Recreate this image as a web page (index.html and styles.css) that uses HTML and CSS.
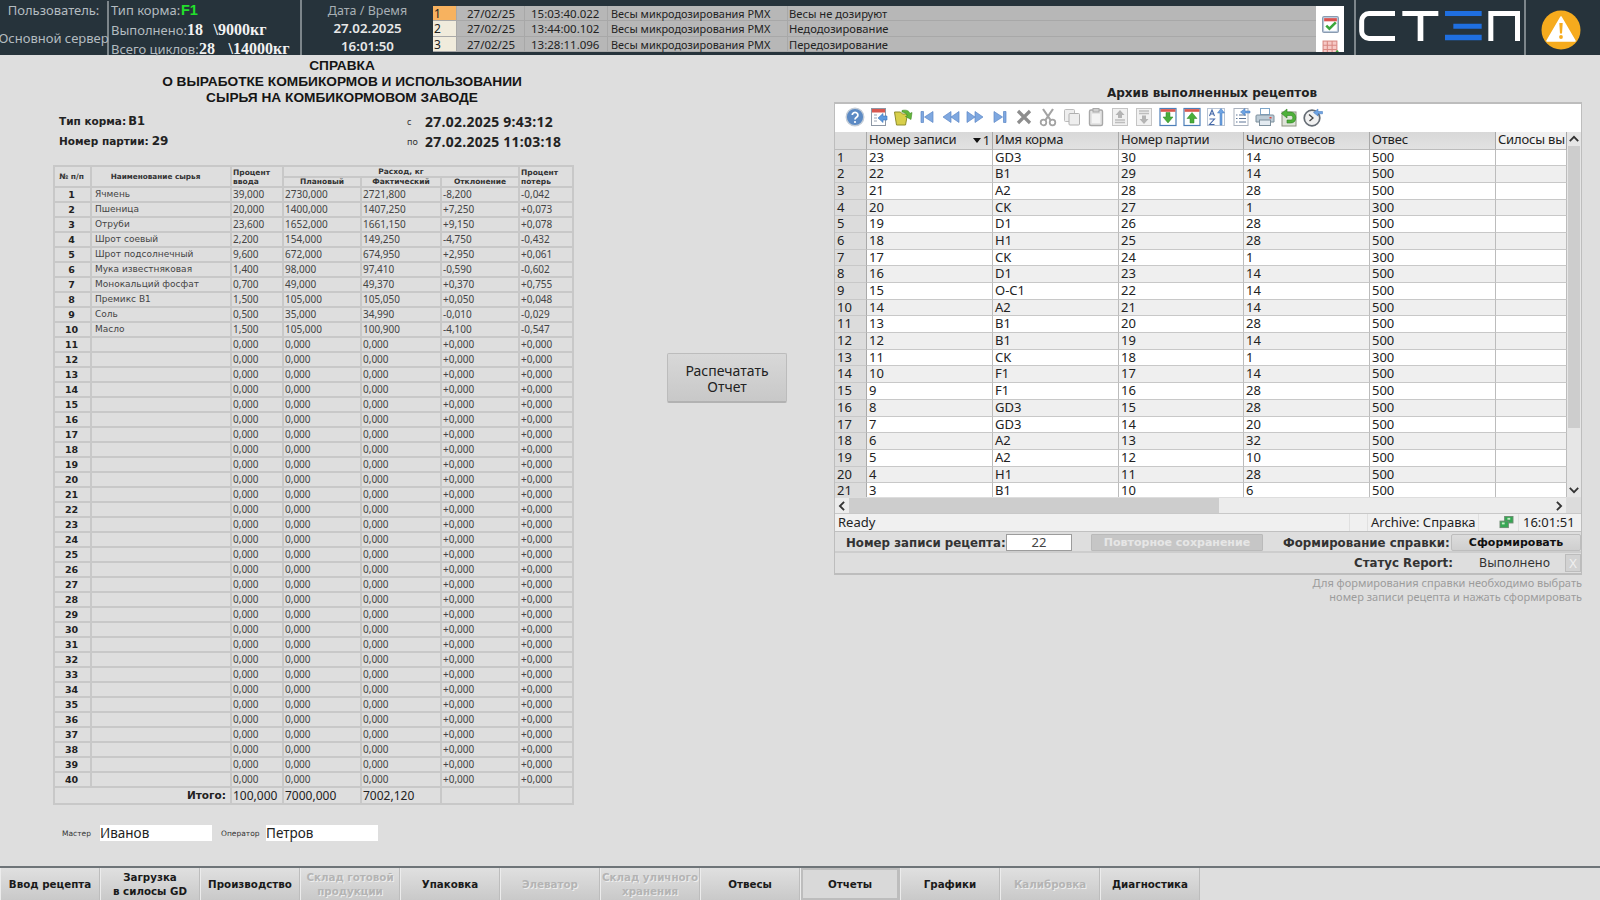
FILE: index.html
```html
<!DOCTYPE html>
<html lang="ru">
<head>
<meta charset="utf-8">
<title>Справка</title>
<link rel="stylesheet" href="styles.css">
</head>
<body>
<header class="top">
  <div class="user-col"><span>Пользователь:</span><span>Основной сервер</span></div>
  <div class="feed-col">
    <div class="feed-line"><span class="feed-label l1">Тип корма:</span><b class="feed-green">F1</b></div>
    <div class="feed-line"><span class="feed-label l2">Выполнено:</span><b class="feed-num n1">18</b><b class="feed-num">\9000кг</b></div>
    <div class="feed-line"><span class="feed-label l3">Всего циклов:</span><b class="feed-num n2">28</b><b class="feed-num">\14000кг</b></div>
  </div>
  <div class="date-col"><span class="date-title">Дата / Время</span><b>27.02.2025</b><b>16:01:50</b></div>
  <div class="alarms">
    <div class="alarm-list">
      <div class="alarm-row"><span class="a-n a-hot">1</span><span class="a-d">27/02/25</span><span class="a-t">15:03:40.022</span><span class="a-s">Весы микродозирования РМХ</span><span class="a-m">Весы не дозируют</span></div>
      <div class="alarm-row"><span class="a-n">2</span><span class="a-d">27/02/25</span><span class="a-t">13:44:00.102</span><span class="a-s">Весы микродозирования РМХ</span><span class="a-m">Недодозирование</span></div>
      <div class="alarm-row"><span class="a-n">3</span><span class="a-d">27/02/25</span><span class="a-t">13:28:11.096</span><span class="a-s">Весы микродозирования РМХ</span><span class="a-m">Передозирование</span></div>
    </div>
    <div class="alarm-tools">
      <svg class="alarm-icon" viewBox="0 0 16 16"><rect x=".5" y=".5" width="15" height="15" rx="1.5" fill="#b9c9dc" stroke="#8a9bb0"/><rect x="2" y="2" width="12" height="12" fill="#fff"/><rect x="2" y="2" width="12" height="3" fill="#d9534f"/><path d="M4 9l3 3 6-6" fill="none" stroke="#3aa63a" stroke-width="2.4"/></svg>
      <svg class="alarm-icon clipped" viewBox="0 0 16 16"><rect x="1" y="1" width="13" height="14" fill="#f6c9c6" stroke="#d98882"/><path d="M1 5h13M1 9h13M5 1v14M9.500 1v14" stroke="#d98882"/><path d="M8 12l3 3 4-5" fill="none" stroke="#3aa63a" stroke-width="2"/></svg>
    </div>
  </div>
  <div class="logo-col">
    <svg class="logo" viewBox="237 37 483 90">
      <path d="M345 44.500H267a22 22 0 0 0-22 22v31a22 22 0 0 0 22 22h78" fill="none" stroke="#fff" stroke-width="15"/>
      <path d="M367 37h108v15h-45v75h-17V52h-46z" fill="#fff"/>
      <path d="M495 37h110v15H495zM520 75h85v15h-85zM495 108h110v17H495z" fill="#1f6fe0"/>
      <path d="M625 127V37h95v90h-15V52h-65v75z" fill="#fff"/>
    </svg>
  </div>
  <div class="warn-col">
    <svg class="warn" viewBox="0 0 40 40"><circle cx="20" cy="20" r="19.500" fill="#f6ab1d"/><path d="M20 7L34 31H6z" fill="#fff" stroke="#fff" stroke-width="1.500" stroke-linejoin="round"/><path d="M18.300 13h3.400l-.7 10.500h-2z" fill="#f6ab1d"/><circle cx="20" cy="27" r="1.900" fill="#f6ab1d"/></svg>
  </div>
</header>

<main class="main">
  <section class="report">
    <h1 class="report-title">СПРАВКА<br>О ВЫРАБОТКЕ КОМБИКОРМОВ И ИСПОЛЬЗОВАНИИ<br>СЫРЬЯ НА КОМБИКОРМОВОМ ЗАВОДЕ</h1>
    <div class="meta">
      <div class="meta-left">
        <div class="meta-line"><b class="meta-label">Тип корма:</b><b class="meta-val">B1</b></div>
        <div class="meta-line"><b class="meta-label">Номер партии:</b><b class="meta-val big">29</b></div>
      </div>
      <div class="meta-right">
        <div class="meta-line"><span class="meta-small">с</span><b class="meta-date">27.02.2025 9:43:12</b></div>
        <div class="meta-line"><span class="meta-small">по</span><b class="meta-date">27.02.2025 11:03:18</b></div>
      </div>
    </div>
    <table class="rt">
      <colgroup><col class="c1"><col class="c2"><col class="c3"><col class="c4"><col class="c5"><col class="c6"><col class="c7"></colgroup>
      <thead>
        <tr class="h1"><th class="hn" rowspan="2">№ п/п</th><th class="hname" rowspan="2">Наименование сырья</th><th class="hl" rowspan="2">Процент<br>ввода</th><th colspan="3">Расход, кг</th><th class="hl" rowspan="2">Процент<br>потерь</th></tr>
        <tr class="h2"><th>Плановый</th><th>Фактический</th><th>Отклонение</th></tr>
      </thead>
      <tbody>
        <tr><th>1</th><td>Ячмень</td><td>39,000</td><td>2730,000</td><td>2721,800</td><td>-8,200</td><td>-0,042</td></tr>
        <tr><th>2</th><td>Пшеница</td><td>20,000</td><td>1400,000</td><td>1407,250</td><td>+7,250</td><td>+0,073</td></tr>
        <tr><th>3</th><td>Отруби</td><td>23,600</td><td>1652,000</td><td>1661,150</td><td>+9,150</td><td>+0,078</td></tr>
        <tr><th>4</th><td>Шрот соевый</td><td>2,200</td><td>154,000</td><td>149,250</td><td>-4,750</td><td>-0,432</td></tr>
        <tr><th>5</th><td>Шрот подсолнечный</td><td>9,600</td><td>672,000</td><td>674,950</td><td>+2,950</td><td>+0,061</td></tr>
        <tr><th>6</th><td>Мука известняковая</td><td>1,400</td><td>98,000</td><td>97,410</td><td>-0,590</td><td>-0,602</td></tr>
        <tr><th>7</th><td>Монокальций фосфат</td><td>0,700</td><td>49,000</td><td>49,370</td><td>+0,370</td><td>+0,755</td></tr>
        <tr><th>8</th><td>Премикс B1</td><td>1,500</td><td>105,000</td><td>105,050</td><td>+0,050</td><td>+0,048</td></tr>
        <tr><th>9</th><td>Соль</td><td>0,500</td><td>35,000</td><td>34,990</td><td>-0,010</td><td>-0,029</td></tr>
        <tr><th>10</th><td>Масло</td><td>1,500</td><td>105,000</td><td>100,900</td><td>-4,100</td><td>-0,547</td></tr>
        <tr><th>11</th><td></td><td>0,000</td><td>0,000</td><td>0,000</td><td>+0,000</td><td>+0,000</td></tr>
        <tr><th>12</th><td></td><td>0,000</td><td>0,000</td><td>0,000</td><td>+0,000</td><td>+0,000</td></tr>
        <tr><th>13</th><td></td><td>0,000</td><td>0,000</td><td>0,000</td><td>+0,000</td><td>+0,000</td></tr>
        <tr><th>14</th><td></td><td>0,000</td><td>0,000</td><td>0,000</td><td>+0,000</td><td>+0,000</td></tr>
        <tr><th>15</th><td></td><td>0,000</td><td>0,000</td><td>0,000</td><td>+0,000</td><td>+0,000</td></tr>
        <tr><th>16</th><td></td><td>0,000</td><td>0,000</td><td>0,000</td><td>+0,000</td><td>+0,000</td></tr>
        <tr><th>17</th><td></td><td>0,000</td><td>0,000</td><td>0,000</td><td>+0,000</td><td>+0,000</td></tr>
        <tr><th>18</th><td></td><td>0,000</td><td>0,000</td><td>0,000</td><td>+0,000</td><td>+0,000</td></tr>
        <tr><th>19</th><td></td><td>0,000</td><td>0,000</td><td>0,000</td><td>+0,000</td><td>+0,000</td></tr>
        <tr><th>20</th><td></td><td>0,000</td><td>0,000</td><td>0,000</td><td>+0,000</td><td>+0,000</td></tr>
        <tr><th>21</th><td></td><td>0,000</td><td>0,000</td><td>0,000</td><td>+0,000</td><td>+0,000</td></tr>
        <tr><th>22</th><td></td><td>0,000</td><td>0,000</td><td>0,000</td><td>+0,000</td><td>+0,000</td></tr>
        <tr><th>23</th><td></td><td>0,000</td><td>0,000</td><td>0,000</td><td>+0,000</td><td>+0,000</td></tr>
        <tr><th>24</th><td></td><td>0,000</td><td>0,000</td><td>0,000</td><td>+0,000</td><td>+0,000</td></tr>
        <tr><th>25</th><td></td><td>0,000</td><td>0,000</td><td>0,000</td><td>+0,000</td><td>+0,000</td></tr>
        <tr><th>26</th><td></td><td>0,000</td><td>0,000</td><td>0,000</td><td>+0,000</td><td>+0,000</td></tr>
        <tr><th>27</th><td></td><td>0,000</td><td>0,000</td><td>0,000</td><td>+0,000</td><td>+0,000</td></tr>
        <tr><th>28</th><td></td><td>0,000</td><td>0,000</td><td>0,000</td><td>+0,000</td><td>+0,000</td></tr>
        <tr><th>29</th><td></td><td>0,000</td><td>0,000</td><td>0,000</td><td>+0,000</td><td>+0,000</td></tr>
        <tr><th>30</th><td></td><td>0,000</td><td>0,000</td><td>0,000</td><td>+0,000</td><td>+0,000</td></tr>
        <tr><th>31</th><td></td><td>0,000</td><td>0,000</td><td>0,000</td><td>+0,000</td><td>+0,000</td></tr>
        <tr><th>32</th><td></td><td>0,000</td><td>0,000</td><td>0,000</td><td>+0,000</td><td>+0,000</td></tr>
        <tr><th>33</th><td></td><td>0,000</td><td>0,000</td><td>0,000</td><td>+0,000</td><td>+0,000</td></tr>
        <tr><th>34</th><td></td><td>0,000</td><td>0,000</td><td>0,000</td><td>+0,000</td><td>+0,000</td></tr>
        <tr><th>35</th><td></td><td>0,000</td><td>0,000</td><td>0,000</td><td>+0,000</td><td>+0,000</td></tr>
        <tr><th>36</th><td></td><td>0,000</td><td>0,000</td><td>0,000</td><td>+0,000</td><td>+0,000</td></tr>
        <tr><th>37</th><td></td><td>0,000</td><td>0,000</td><td>0,000</td><td>+0,000</td><td>+0,000</td></tr>
        <tr><th>38</th><td></td><td>0,000</td><td>0,000</td><td>0,000</td><td>+0,000</td><td>+0,000</td></tr>
        <tr><th>39</th><td></td><td>0,000</td><td>0,000</td><td>0,000</td><td>+0,000</td><td>+0,000</td></tr>
        <tr><th>40</th><td></td><td>0,000</td><td>0,000</td><td>0,000</td><td>+0,000</td><td>+0,000</td></tr>
      </tbody>
      <tfoot>
        <tr><th class="total-label" colspan="2">Итого:</th><td>100,000</td><td>7000,000</td><td>7002,120</td><td></td><td></td></tr>
      </tfoot>
    </table>
    <div class="signs">
      <span class="sign-label sl1">Мастер</span><span class="sign-box">Иванов</span>
      <span class="sign-label sl2">Оператор</span><span class="sign-box">Петров</span>
    </div>
  </section>

  <section class="print-col">
    <button class="print-btn">Распечатать<br>Отчет</button>
  </section>

  <section class="archive">
    <h2 class="archive-title">Архив выполненных рецептов</h2>
    <div class="panel">
      <div class="toolbar">
        <svg class="ti" viewBox="0 0 20 20"><circle cx="10" cy="10" r="8.800" fill="#5c8ac4" stroke="#c3ccd6" stroke-width="1.400"/><path d="M7.300 8a2.800 2.600 0 1 1 4.300 2.200c-1 .7-1.600 1.100-1.600 2.300" fill="none" stroke="#fff" stroke-width="1.800"/><circle cx="10" cy="15" r="1.100" fill="#fff"/></svg>
        <svg class="ti" viewBox="0 0 20 20"><rect x="2.500" y="1.500" width="14" height="17" fill="#fff" stroke="#8d97a5"/><rect x="3" y="2" width="13" height="3.500" fill="#d9574f"/><path d="M5 8h3M5 11h3M5 14h3" stroke="#9aa5b4"/><path d="M18 9h-4V6.500L9 11l5 4.500V13h4z" fill="#5d9be0" stroke="#3b74b8" stroke-width=".6"/></svg>
        <svg class="ti" viewBox="0 0 20 20"><path d="M1.500 5h6l2 2h5l-2 11H3.500z" fill="#d8cf4a" stroke="#8e8d2b"/><path d="M9 3.500c4-1 7 0 8 3l2-1-1 7-5.500-3 2-1c-1-2-3-3-5.500-3.500z" fill="#63b53a" stroke="#3c8a25" stroke-width=".6"/></svg>
        <svg class="ti" viewBox="0 0 20 20"><path d="M4 4.500h2.500v11H4zM16 4.500v11L7.500 10z" fill="#7fa8e0" stroke="#5b86c6" stroke-width=".7"/></svg>
        <svg class="ti" viewBox="0 0 20 20"><path d="M10 4.500v11L2 10zM18 4.500v11L10 10z" fill="#7fa8e0" stroke="#5b86c6" stroke-width=".7"/></svg>
        <svg class="ti" viewBox="0 0 20 20"><path d="M10 4.500v11l8-5.500zM2 4.500v11l8-5.500z" fill="#7fa8e0" stroke="#5b86c6" stroke-width=".7"/></svg>
        <svg class="ti" viewBox="0 0 20 20"><path d="M16 4.500h-2.500v11H16zM4 4.500v11l8.500-5.500z" fill="#7fa8e0" stroke="#5b86c6" stroke-width=".7"/></svg>
        <svg class="ti" viewBox="0 0 20 20"><path d="M4 4l12 12M16 4L4 16" stroke="#8d8d8d" stroke-width="3.200"/></svg>
        <svg class="ti" viewBox="0 0 20 20"><path d="M5 2l7.500 11M15 2L7.500 13" stroke="#a3a3a3" stroke-width="2.200"/><circle cx="5.500" cy="15.500" r="2.800" fill="none" stroke="#a3a3a3" stroke-width="1.800"/><circle cx="14.500" cy="15.500" r="2.800" fill="none" stroke="#a3a3a3" stroke-width="1.800"/></svg>
        <svg class="ti" viewBox="0 0 20 20"><rect x="2.500" y="2.500" width="10" height="12" rx="1" fill="#eee" stroke="#bcbcbc"/><rect x="7" y="6.500" width="10.500" height="11.500" rx="1" fill="#eee" stroke="#b0b0b0"/></svg>
        <svg class="ti" viewBox="0 0 20 20"><rect x="3.500" y="3" width="13" height="15.500" rx="1.500" fill="#e4e4e4" stroke="#a8a8a8" stroke-width="1.400"/><rect x="7" y="1.500" width="6" height="3.500" fill="#cfcfcf" stroke="#a8a8a8"/><rect x="6" y="7" width="8" height="9" fill="#f4f4f4"/></svg>
        <svg class="ti" viewBox="0 0 20 20"><rect x="2.500" y="1.500" width="15" height="17" fill="#f1f1f1" stroke="#c5c5c5"/><path d="M10 3l4.500 5H12v3H8V8H5.500z" fill="#b4b4b4"/><path d="M5 13h10M5 15.500h10" stroke="#bdbdbd" stroke-width="1.500"/></svg>
        <svg class="ti" viewBox="0 0 20 20"><rect x="2.500" y="1.500" width="15" height="17" fill="#f1f1f1" stroke="#c5c5c5"/><path d="M5 4h10M5 6.500h10" stroke="#bdbdbd" stroke-width="1.500"/><path d="M10 17l4.500-5H12V8.500H8V12H5.500z" fill="#b4b4b4"/></svg>
        <svg class="ti" viewBox="0 0 20 20"><rect x="2" y="1.500" width="16" height="17" fill="#fff" stroke="#4d7fb8" stroke-width="1.200"/><rect x="2.600" y="2.100" width="14.800" height="2.700" fill="#d9574f"/><path d="M8 5.500h4V10h3l-5 6-5-6h3z" fill="#49ad3a" stroke="#2e8526" stroke-width=".5"/></svg>
        <svg class="ti" viewBox="0 0 20 20"><rect x="2" y="1.500" width="16" height="17" fill="#fff" stroke="#4d7fb8" stroke-width="1.200"/><rect x="2.600" y="2.100" width="14.800" height="2.700" fill="#d9574f"/><path d="M8 16h4v-4.500h3l-5-6-5 6h3z" fill="#49ad3a" stroke="#2e8526" stroke-width=".5"/></svg>
        <svg class="ti" viewBox="0 0 20 20"><rect x="1.500" y="1.500" width="17" height="17" fill="#fdfdfd" stroke="#b8c4d4"/><path d="M3.500 9l2.500-6 2.500 6M4.500 7h3M3.500 12h5l-5 5.500h5" fill="none" stroke="#4468a8" stroke-width="1.100"/><path d="M14 18V6h-2.500l3.500-4.500L18.500 6H16v12z" fill="#6ea3e2" stroke="#3f74ba" stroke-width=".5"/></svg>
        <svg class="ti" viewBox="0 0 20 20"><rect x="3" y="1.500" width="14" height="17" fill="#fff" stroke="#aab2be"/><path d="M5 8h1.500M5 11.500h1.500M5 15h1.500M8 8h7M8 11.500h7M8 15h7" stroke="#5d7596"/><path d="M19 4h-5V1.500L9.500 5l4.500 3.500V6h5z" fill="#6ea3e2" stroke="#3f74ba" stroke-width=".5"/></svg>
        <svg class="ti" viewBox="0 0 20 20"><rect x="5.500" y="1.500" width="9" height="6" fill="#fff" stroke="#7ea6c9"/><path d="M2 8h16a1 1 0 0 1 1 1v6H1V9a1 1 0 0 1 1-1z" fill="#bccbd6" stroke="#7d8f9c"/><rect x="4.500" y="13" width="11" height="5.500" fill="#e4ebf1" stroke="#7d8f9c"/><rect x="14.500" y="10" width="2" height="1.500" fill="#e0483e"/></svg>
        <svg class="ti" viewBox="0 0 20 20"><rect x="3" y="5" width="14" height="14" fill="#dfe3d9" stroke="#8b927f"/><path d="M8 2L2.500 6.500 8 11V8.500h3.500c1.500 0 2.300.8 2.300 2.200s-.8 2.300-2.300 2.300H8V16h3.500c3.300 0 5.300-2 5.300-5.300S14.800 5 11.500 5H8z" fill="#4fb13a" stroke="#2b8120" stroke-width=".6"/></svg>
        <svg class="ti" viewBox="0 0 20 20"><circle cx="9" cy="11" r="7.800" fill="#f1f1f1" stroke="#656c74" stroke-width="1.700"/><path d="M6 7.500L10 11l-3.500 3" fill="none" stroke="#444" stroke-width="1.300"/><path d="M19.500 4.500H15V2l-4.500 3.500L15 9V6.800h4.500z" fill="#6ea3e2" stroke="#3f74ba" stroke-width=".5"/></svg>
      </div>
      <div class="grid-area">
        <div class="grid-body">
          <div class="grow ghead"><span class="rh"></span><span class="sorted">Номер записи<i class="sort-mark"><i class="sort-tri"></i>1</i></span><span>Имя корма</span><span>Номер партии</span><span>Число отвесов</span><span>Отвес</span><span>Силосы вы</span></div>
          <div class="grow"><span class="rh">1</span><span>23</span><span>GD3</span><span>30</span><span>14</span><span>500</span><span></span></div>
          <div class="grow alt"><span class="rh">2</span><span>22</span><span>B1</span><span>29</span><span>14</span><span>500</span><span></span></div>
          <div class="grow"><span class="rh">3</span><span>21</span><span>A2</span><span>28</span><span>28</span><span>500</span><span></span></div>
          <div class="grow alt"><span class="rh">4</span><span>20</span><span>CK</span><span>27</span><span>1</span><span>300</span><span></span></div>
          <div class="grow"><span class="rh">5</span><span>19</span><span>D1</span><span>26</span><span>28</span><span>500</span><span></span></div>
          <div class="grow alt"><span class="rh">6</span><span>18</span><span>H1</span><span>25</span><span>28</span><span>500</span><span></span></div>
          <div class="grow"><span class="rh">7</span><span>17</span><span>CK</span><span>24</span><span>1</span><span>300</span><span></span></div>
          <div class="grow alt"><span class="rh">8</span><span>16</span><span>D1</span><span>23</span><span>14</span><span>500</span><span></span></div>
          <div class="grow"><span class="rh">9</span><span>15</span><span>O-C1</span><span>22</span><span>14</span><span>500</span><span></span></div>
          <div class="grow alt"><span class="rh">10</span><span>14</span><span>A2</span><span>21</span><span>14</span><span>500</span><span></span></div>
          <div class="grow"><span class="rh">11</span><span>13</span><span>B1</span><span>20</span><span>28</span><span>500</span><span></span></div>
          <div class="grow alt"><span class="rh">12</span><span>12</span><span>B1</span><span>19</span><span>14</span><span>500</span><span></span></div>
          <div class="grow"><span class="rh">13</span><span>11</span><span>CK</span><span>18</span><span>1</span><span>300</span><span></span></div>
          <div class="grow alt"><span class="rh">14</span><span>10</span><span>F1</span><span>17</span><span>14</span><span>500</span><span></span></div>
          <div class="grow"><span class="rh">15</span><span>9</span><span>F1</span><span>16</span><span>28</span><span>500</span><span></span></div>
          <div class="grow alt"><span class="rh">16</span><span>8</span><span>GD3</span><span>15</span><span>28</span><span>500</span><span></span></div>
          <div class="grow"><span class="rh">17</span><span>7</span><span>GD3</span><span>14</span><span>20</span><span>500</span><span></span></div>
          <div class="grow alt"><span class="rh">18</span><span>6</span><span>A2</span><span>13</span><span>32</span><span>500</span><span></span></div>
          <div class="grow"><span class="rh">19</span><span>5</span><span>A2</span><span>12</span><span>10</span><span>500</span><span></span></div>
          <div class="grow alt"><span class="rh">20</span><span>4</span><span>H1</span><span>11</span><span>28</span><span>500</span><span></span></div>
          <div class="grow last"><span class="rh">21</span><span>3</span><span>B1</span><span>10</span><span>6</span><span>500</span><span></span></div>
        </div>
        <div class="vscroll">
          <svg class="chev" viewBox="0 0 10 10"><path d="M2 6.500L5 3.500l3 3" fill="none" stroke="#333" stroke-width="1.300"/></svg>
          <div class="vtrack"><div class="vthumb"></div></div>
          <svg class="chev" viewBox="0 0 10 10"><path d="M2 3.500L5 6.500l3-3" fill="none" stroke="#333" stroke-width="1.300"/></svg>
        </div>
      </div>
      <div class="hscroll">
        <svg class="chev" viewBox="0 0 10 10"><path d="M6.500 2L3.500 5l3 3" fill="none" stroke="#333" stroke-width="1.300"/></svg>
        <div class="htrack"><div class="hthumb"></div></div>
        <svg class="chev" viewBox="0 0 10 10"><path d="M3.500 2L6.500 5l-3 3" fill="none" stroke="#333" stroke-width="1.300"/></svg>
        <span class="corner"></span>
      </div>
      <div class="statusbar">
        <span class="st-ready">Ready</span>
        <span class="st-gap"></span>
        <span class="st-arch">Archive: Справка</span>
        <span class="st-icon"><svg class="net" viewBox="0 0 16 14"><rect x="6" y="0.500" width="9" height="7" fill="#35a853" stroke="#6c8a70"/><rect x="1" y="5.500" width="9" height="7" fill="#35a853" stroke="#6c8a70"/><rect x="3" y="7" width="3" height="2" fill="#c7ebc7"/><rect x="9" y="2" width="3" height="2" fill="#c7ebc7"/></svg></span>
        <span class="st-time">16:01:51</span>
      </div>
      <div class="form-row">
        <b class="form-label lbl-rec">Номер записи рецепта:</b>
        <span class="rec-input">22</span>
        <span class="btn-off">Повторное сохранение</span>
        <b class="form-label lbl-form">Формирование справки:</b>
        <button class="btn-make">Сформировать</button>
      </div>
      <div class="status-row">
        <b class="form-label">Статус Report:</b>
        <span class="status-val">Выполнено</span>
        <span class="x-btn">X</span>
      </div>
    </div>
    <p class="hint">Для формирования справки необходимо выбрать<br>номер записи рецепта и нажать сформировать</p>
  </section>
</main>

<nav class="nav">
  <button class="nb">Ввод рецепта</button>
  <button class="nb">Загрузка<br>в силосы GD</button>
  <button class="nb">Производство</button>
  <button class="nb off">Склад готовой<br>продукции</button>
  <button class="nb">Упаковка</button>
  <button class="nb off">Элеватор</button>
  <button class="nb off">Склад уличного<br>хранения</button>
  <button class="nb">Отвесы</button>
  <button class="nb on">Отчеты</button>
  <button class="nb">Графики</button>
  <button class="nb off">Калибровка</button>
  <button class="nb">Диагностика</button>
</nav>
</body>
</html>
```

FILE: styles.css
```css
* { box-sizing: border-box; }
html, body { margin: 0; padding: 0; }
body {
  width: 1600px; height: 900px; overflow: hidden;
  display: flex; flex-direction: column;
  background: #dedede; color: #222;
  font-family: "Noto Sans", "Liberation Sans", sans-serif;
}
/* header */
.top { height: 55px; flex: none; display: flex; background: #26333b; color: #b4bcc0; font-size: 13px; }
.user-col { width: 109px; flex: none; border-right: 2px solid #7d868b; margin: 1px 0 0; display: flex; flex-direction: column; align-items: center; font-size: 13px; white-space: nowrap; line-height: 16px; }
.user-col span:first-child { padding: 1px 0 0; height: 29px; }
.feed-col { width: 193px; flex: none; border-right: 2px solid #7d868b; padding: 0 0 0 2px; }
.feed-line { height: 19.500px; display: flex; align-items: center; white-space: nowrap; font-size: 13px; }
.feed-line:first-child { height: 20px; }
.l1 { width: 70px; }
.l2 { width: 76px; }
.l3 { width: 88px; }
.feed-green { color: #22e02b; font-size: 14.500px; font-family: "Liberation Sans", sans-serif; }
.feed-num { color: #f2f2f2; font-family: "Liberation Serif", serif; font-size: 16px; }
.n1 { width: 26.500px; }
.n2 { width: 29.500px; }
.date-col { width: 131px; flex: none; display: flex; flex-direction: column; align-items: center; padding: 2px 0 0; font-size: 13.300px; line-height: 18px; }
.date-col b { color: #e8e8e8; font-weight: 600; }
.date-title { font-size: 12.500px; line-height: 17px; color: #a8b0b5; }
.alarms { width: 911px; height: 46px; margin-top: 6px; flex: none; display: flex; }
.alarm-list { flex: 1; background: #b7b7b7; font-size: 11.500px; color: #222; }
.alarm-row { display: flex; height: 15.330px; line-height: 15px; border-bottom: 1px solid #a8a8a8; white-space: nowrap; }
.alarm-row span { padding-left: 1px; border-right: 1px solid #a8a8a8; }
.a-n { width: 24px; padding-left: 4px; background: #f0ebdc; font-size: 12px; }
.a-hot { background: #f7b25f; }
.a-d { width: 68px; padding-left: 10px !important; }
.a-t { width: 83px; padding-left: 6px !important; }
.a-s { width: 180px; font-size: 10.900px; padding-left: 3px !important; }
.a-m { flex: 1; border-right: 0 !important; font-size: 11.200px; }
.alarm-tools { width: 28px; background: #fff; overflow: hidden; padding: 10px 0 0 6px; display: flex; flex-direction: column; gap: 7px; }
.alarm-icon { width: 17px; height: 17px; flex: none; }
.logo-col { margin-left: 10px; width: 172px; flex: none; border-left: 2px solid #7d868b; border-right: 2px solid #7d868b; padding: 11px 0 0 3px; }
.logo { width: 161px; height: 30px; display: block; }
.warn-col { flex: 1; padding: 10px 0 0 15px; }
.warn { width: 40px; height: 40px; display: block; }

/* layout */
.main { flex: 1; display: flex; min-height: 0; }
.report { width: 667px; flex: none; padding: 3px 0 0 53px; }
.report-title { margin: 0 0 0 -53px; width: 684px; text-align: center; font-family: "Liberation Sans", sans-serif; font-weight: 700; font-size: 13.700px; line-height: 16px; color: #151515; }
.meta { display: flex; margin-top: 5px; padding-left: 6px; height: 41px; }
.meta-left { width: 348px; }
.meta-line { height: 20px; display: flex; align-items: center; white-space: nowrap; }
.meta-label { font-family: "DejaVu Sans", sans-serif; font-size: 10.500px; }
.meta-val { font-family: "DejaVu Sans", sans-serif; font-size: 11.500px; margin-left: 2px; }
.meta-val.big { font-size: 12px; margin-left: 3px; }
.meta-small { width: 18px; font-size: 9px; color: #333; }
.meta-date { font-family: "Open Sans", sans-serif; font-size: 13.900px; letter-spacing: .3px; }

/* report table */
.rt { width: 519px; table-layout: fixed; border-collapse: collapse; margin-top: 13px; font-size: 10px; color: #444; }
.c1 { width: 37px; } .c2 { width: 140px; } .c3 { width: 52px; } .c4 { width: 78px; } .c5 { width: 80px; } .c6 { width: 78px; } .c7 { width: 54px; }
.rt th, .rt td { border: 2px solid #c8c8c8; height: 15px; padding: 0 1px; line-height: 11px; white-space: nowrap; }
.rt td { text-align: left; }
.rt td:nth-child(2) { padding-left: 3px; font-family: "DejaVu Sans", sans-serif; font-size: 9px; }
.rt tbody th { font-family: "DejaVu Sans", sans-serif; font-size: 9.500px; color: #222; padding-right: 3px; }
.rt thead th { font-family: "DejaVu Sans", sans-serif; font-size: 7.500px; color: #333; }
.rt thead th.hn { padding-right: 3px; }
.rt thead th.hname { font-size: 7.300px; padding-right: 12px; }
.rt .h1 th { height: 9px; line-height: 9px; }
.rt .h2 th { height: 10px; line-height: 8px; }
.rt thead th.hl { text-align: left; padding-left: 1px; line-height: 9px; }
.rt tfoot td { height: 17px; font-size: 12px; color: #222; }
.rt tfoot td:nth-child(2) { font-family: inherit; font-size: 12px; padding-left: 1px; }
.total-label { text-align: right; font-family: "DejaVu Sans", sans-serif; font-size: 10.500px; padding-right: 4px !important; color: #222; }
.signs { display: flex; align-items: center; height: 16px; margin-top: 20px; }
.sign-label { font-family: "DejaVu Sans", sans-serif; font-size: 7.500px; color: #333; }
.sl1 { margin-left: 9px; width: 38px; }
.sl2 { margin-left: 9px; width: 45px; }
.sign-box { width: 112px; height: 16px; background: #fff; font-size: 13.500px; line-height: 16px; color: #222; white-space: nowrap; }

/* print */
.print-col { width: 120px; flex: none; padding-top: 298px; }
.print-btn { width: 120px; height: 50px; padding: 2px 0 0; font: 14px/16px "Noto Sans", sans-serif; color: #222; background: linear-gradient(#d8d8d8, #c8c8c8); border: 1px solid #bcbcbc; border-bottom: 2px solid #b2b2b2; border-radius: 2px; }

/* archive */
.archive { margin-left: 47px; width: 748px; flex: none; padding-top: 30px; }
.archive-title { margin: 0 0 1px; padding-left: 8px; height: 16px; text-align: center; font: 700 12px/16px "DejaVu Sans", sans-serif; color: #222; }
.panel { border: 1px solid #bdbdbd; border-width: 2px 1px 2px 1px; height: 473px; display: flex; flex-direction: column; }
.toolbar { height: 28px; flex: none; background: #fff; display: flex; align-items: center; padding: 0 0 2px 10px; gap: 4.100px; }
.ti { width: 20px; height: 20px; flex: none; }
.grid-area { height: 365px; flex: none; display: flex; background: #fff; }
.grid-body { width: 732px; flex: none; }
.grow { display: grid; grid-template-columns: 32px 126px 126px 125px 126px 126px 71px; grid-template-rows: 16.700px; height: 16.700px; font-size: 13px; line-height: 15px; color: #222; background: #fff; }
.grow span { padding-left: 2px; border-right: 1px solid #bcbcbc; border-bottom: 1px solid #c8c8c8; white-space: nowrap; }
.grow .rh { background: #dcdcdc; border-right: 1px solid #aaa; }
.grow.alt { background: #efefef; }
.grow.last { height: 13.500px; grid-template-rows: 13.500px; }
.grow.last span { border-bottom: 0; }
.ghead { height: 17.500px; grid-template-rows: 17.500px; background: #dcdcdc; letter-spacing: -.2px; }
.ghead span { border-bottom: 1px solid #bcbcbc; border-right: 1px solid #a9a9a9; background: linear-gradient(#d8d8d8, #e2e2e2); }
.ghead span:last-child { background: #f0f0f0; }
.sorted { display: flex; justify-content: space-between; padding-right: 2px; }
.sort-mark { font-style: normal; display: flex; align-items: center; gap: 2px; }
.sort-tri { width: 0; height: 0; border: 4.500px solid transparent; border-top: 5px solid #111; border-bottom: 0; }
.vscroll { flex: 1; background: #e6e6e6; display: flex; flex-direction: column; }
.chev { width: 14px; height: 14px; flex: none; display: block; }
.vscroll .chev { align-self: center; }
.vtrack { flex: 1; padding: 0 1px; }
.vthumb { height: 282px; background: #cdcdcd; margin-top: 0; }
.hscroll { height: 16px; flex: none; display: flex; align-items: center; background: #ececec; border-top: 1px solid #ddd; }
.htrack { width: 703px; align-self: stretch; }
.hthumb { width: 370px; height: 100%; background: #cdcdcd; }
.corner { flex: 1; align-self: stretch; background: #dcdcdc; }
.statusbar { height: 19px; flex: none; display: flex; align-items: center; background: #f0f0f0; border-top: 1px solid #c8c8c8; border-bottom: 1px solid #c0c0c0; font-size: 13px; color: #222; white-space: nowrap; }
.statusbar span { height: 100%; display: flex; align-items: center; border-right: 1px solid #e0e0e0; padding-bottom: 1px; }
.st-ready { width: 515px; padding-left: 3px; }
.st-gap { width: 18px; }
.st-arch { width: 111px; padding-left: 3px; }
.st-icon { width: 40px; justify-content: flex-end; padding-right: 4px; }
.net { width: 15px; height: 13px; }
.st-time { padding-left: 4px; border-right: 0 !important; }
.form-row { height: 21px; flex: none; display: flex; align-items: center; padding-top: 2px; border-bottom: 2px solid #cdcdcd; }
.form-label { font-family: "DejaVu Sans", sans-serif; font-size: 11.800px; color: #333; white-space: nowrap; }
.lbl-rec { margin-left: 11px; width: 160px; }
.rec-input { width: 66px; height: 17px; background: #fff; border: 1px solid #9c9c9c; text-align: center; font-size: 13px; line-height: 15px; color: #444; }
.btn-off { margin-left: 19px; width: 172px; height: 17px; background: #c6c6c6; border: 1px solid #bababa; border-radius: 1px; text-align: center; font: 700 11px/15px "DejaVu Sans", sans-serif; color: #e6e6e6; white-space: nowrap; }
.lbl-form { margin-left: 20px; width: 168px; }
.btn-make { width: 130px; height: 17px; padding: 0; background: linear-gradient(#dcdcdc, #cfcfcf); border: 1px solid #bdbdbd; border-radius: 2px; font: 700 11px/15px "DejaVu Sans", sans-serif; color: #111; }
.status-row { flex: 1; display: flex; align-items: center; padding-left: 519px; }
.status-row .form-label { width: 125px; }
.status-val { width: 86px; font: 12px "DejaVu Sans", sans-serif; color: #333; }
.x-btn { width: 16px; height: 18px; background: #d2d2d2; border: 1px solid #bcbcbc; text-align: center; font: 13px/16px "Noto Sans", sans-serif; color: #f0f0f0; }
.hint { margin: 1px 0 0; text-align: right; font: 11px/14px "Noto Sans", sans-serif; color: #9c9c9c; }

/* nav */
.nav { height: 34px; flex: none; display: flex; border-top: 2px solid #6e7478; background: #dedede; }
.nb { width: 100px; height: 32px; flex: none; padding: 0; border: 0; border-right: 1px solid #bdbdbd; border-left: 1px solid #ececec; background: linear-gradient(#e0e0e0, #c9c9c9); font: 700 10.300px/14px "DejaVu Sans", sans-serif; color: #1a1a1a; white-space: nowrap; }
.nb.off { color: #b4b4b4; text-shadow: 1px 1px 0 #eee; }
.nb.on { background: #d9d9d9; box-shadow: inset 0 0 0 2px #bdbdbd; }
```
